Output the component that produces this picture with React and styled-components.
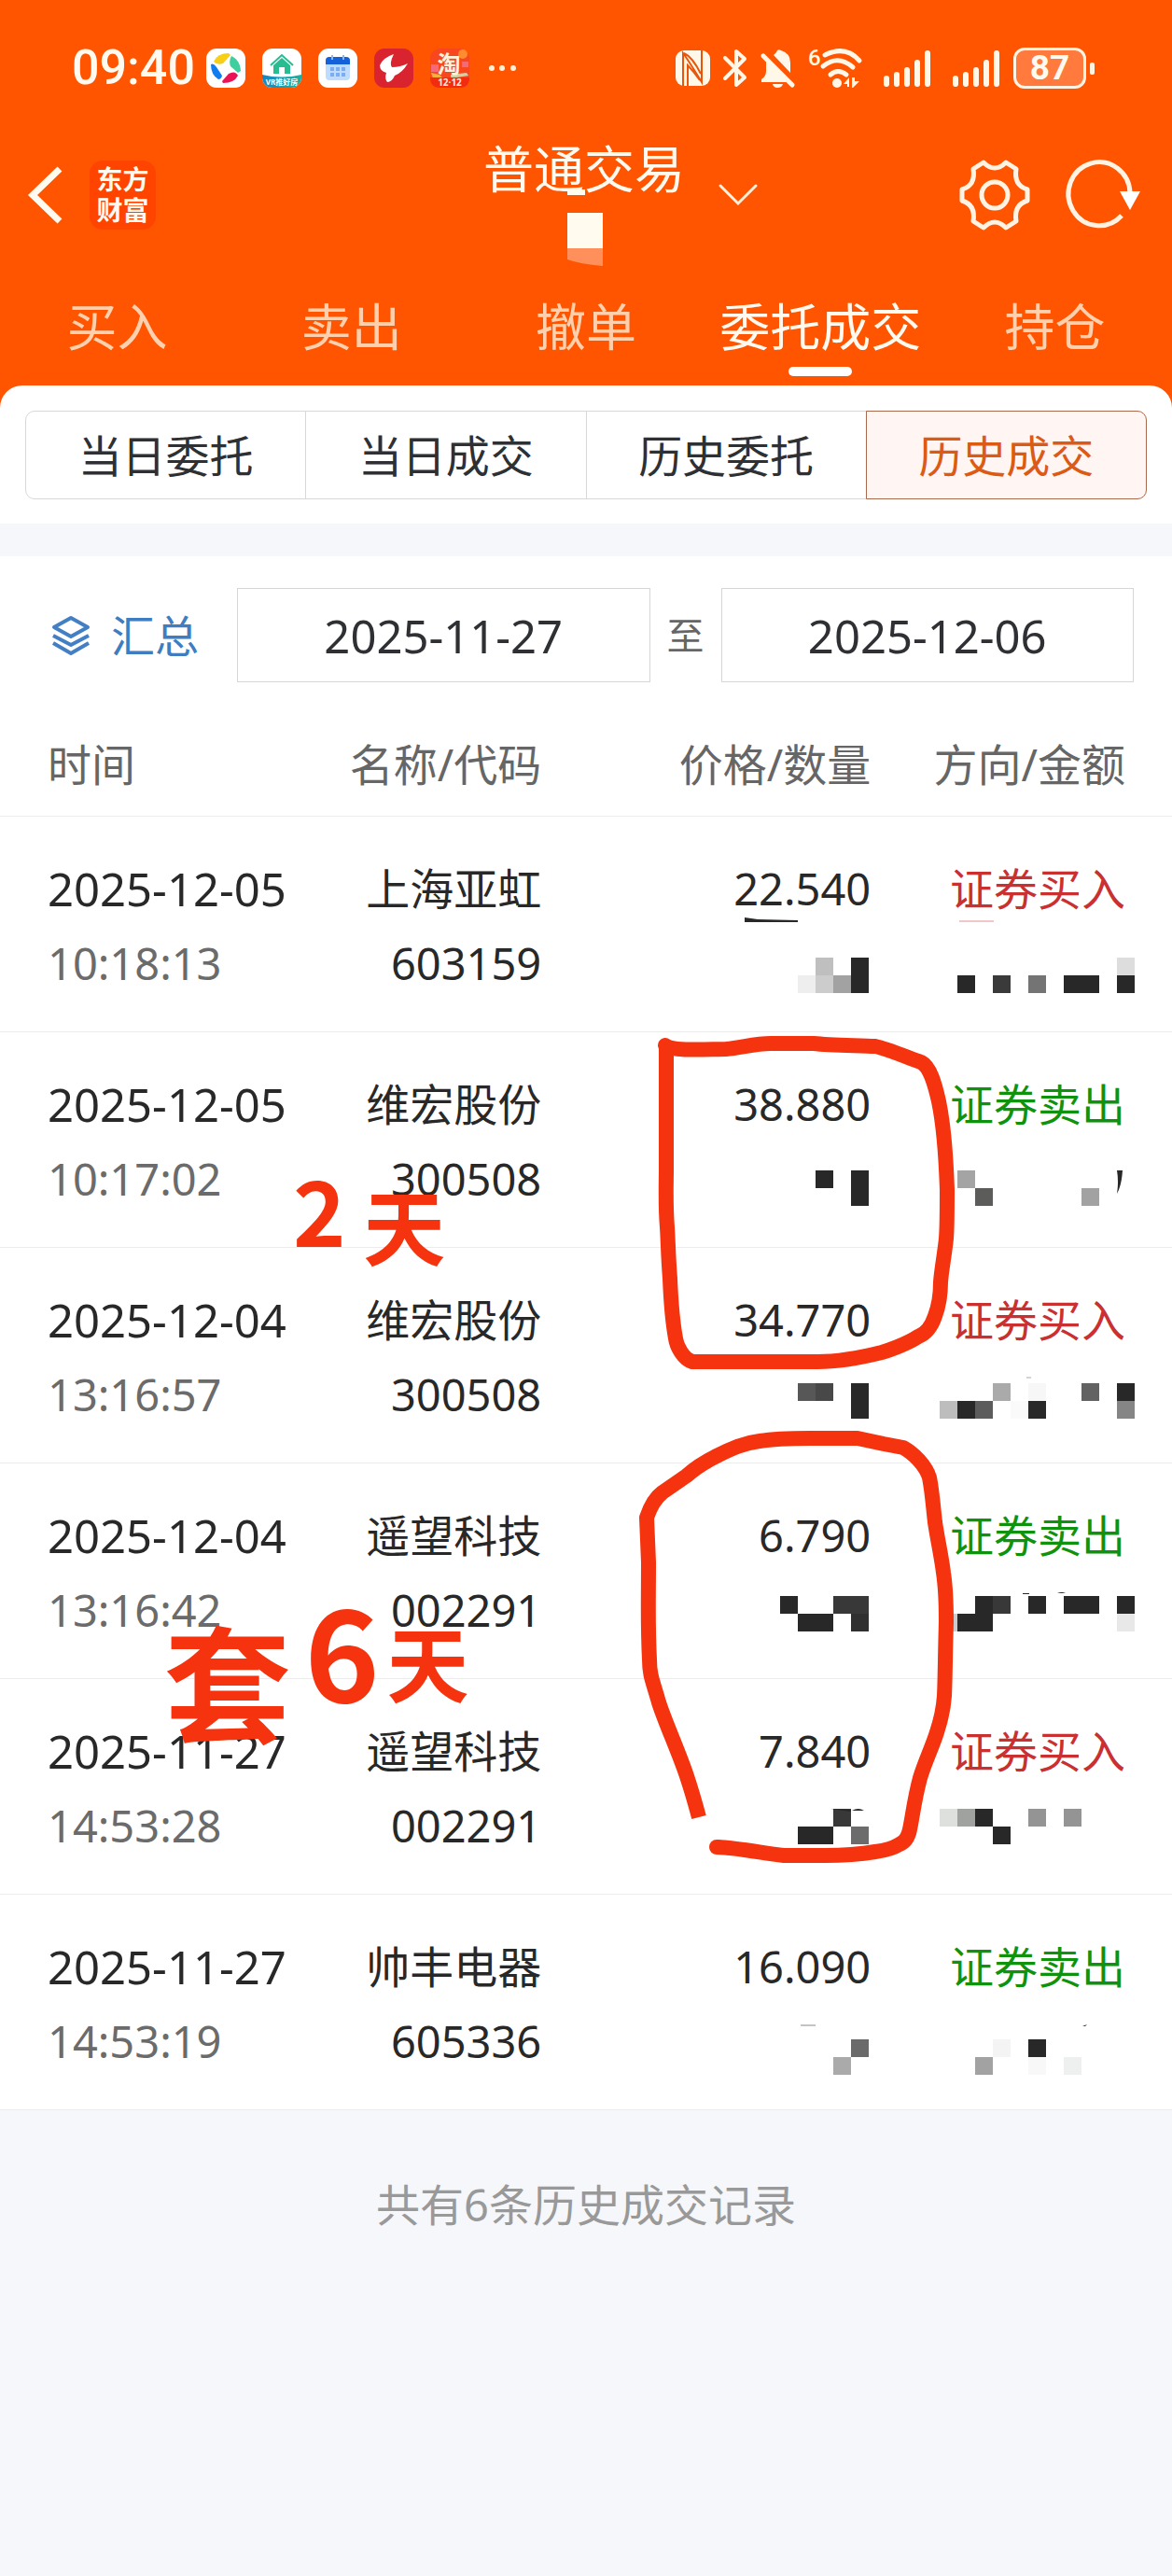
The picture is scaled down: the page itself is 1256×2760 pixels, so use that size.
import { useState } from "react";
import styled, { createGlobalStyle } from "styled-components";

const MAIN_TABS = ["买入", "卖出", "撤单", "委托成交", "持仓"];
const SUB_TABS = ["当日委托", "当日成交", "历史委托", "历史成交"];

const RECORDS = [
  { date: "2025-12-05", time: "10:18:13", name: "上海亚虹", code: "603159", price: "22.540", side: "buy" },
  { date: "2025-12-05", time: "10:17:02", name: "维宏股份", code: "300508", price: "38.880", side: "sell" },
  { date: "2025-12-04", time: "13:16:57", name: "维宏股份", code: "300508", price: "34.770", side: "buy" },
  { date: "2025-12-04", time: "13:16:42", name: "遥望科技", code: "002291", price: "6.790", side: "sell" },
  { date: "2025-11-27", time: "14:53:28", name: "遥望科技", code: "002291", price: "7.840", side: "buy" },
  { date: "2025-11-27", time: "14:53:19", name: "帅丰电器", code: "605336", price: "16.090", side: "sell" },
];

const SIDE_LABEL = { buy: "证券买入", sell: "证券卖出" };

const DARK = "#292828";
const BLOCK = 19;

// hidden quantities and amounts: one line of blocks per entry, [x, colour]
const MOSAIC = [
  { y: 1026, blocks: [[874, "#bfbfbf"], [912, DARK], [1197, "#dddddd"]] },
  {
    y: 1045,
    blocks: [
      [855, "#eeeeee"], [874, "#cccccc"], [893, "#a2a2a2"], [912, DARK],
      [1026, DARK], [1064, "#3a3a3a"], [1102, "#747474"], [1140, DARK], [1159, DARK], [1197, DARK],
    ],
  },
  { y: 1254, blocks: [[874, DARK], [912, DARK], [1026, "#a4a4a4"]] },
  { y: 1273, blocks: [[912, DARK], [1045, "#5c5c5a"], [1159, "#a2a2a2"]] },
  {
    y: 1482,
    blocks: [
      [855, "#575757"], [874, "#484848"], [912, DARK],
      [1064, "#aaaaaa"], [1102, "#f7f7f7"], [1159, "#626262"], [1197, DARK],
    ],
  },
  {
    y: 1501,
    blocks: [
      [912, DARK], [1007, "#bdbdbd"], [1026, DARK], [1045, "#5c5c5c"],
      [1083, "#fafafa"], [1102, DARK], [1197, "#858585"],
    ],
  },
  {
    y: 1710,
    blocks: [
      [836, DARK], [893, "#383838"], [912, "#383838"],
      [1045, DARK], [1064, "#383838"], [1102, DARK], [1140, DARK], [1159, DARK], [1197, DARK],
    ],
  },
  {
    y: 1729,
    blocks: [
      [855, DARK], [874, DARK], [912, "#303030"],
      [1007, "#cccccc"], [1026, DARK], [1045, DARK], [1197, "#e8e8e8"],
    ],
  },
  {
    y: 1938,
    blocks: [
      [893, "#383838"], [1007, "#dde0dd"], [1026, "#a0a2a0"],
      [1045, DARK], [1102, "#949494"], [1140, "#949494"],
    ],
  },
  { y: 1957, blocks: [[855, DARK], [874, DARK], [912, "#6c6c6c"], [1064, DARK]] },
  { y: 2185, blocks: [[912, "#6a6a6a"], [1064, "#f4f4f4"], [1102, DARK]] },
  { y: 2204, blocks: [[893, "#aaaaaa"], [1045, "#a2a2a2"], [1102, "#f8f8f8"], [1140, "#eef0ef"]] },
];

export default function App() {
  const [mainTab, setMainTab] = useState("委托成交");
  const [subTab, setSubTab] = useState("历史成交");
  const [from, setFrom] = useState("2025-11-27");
  const [to, setTo] = useState("2025-12-06");

  return (
    <>
      <GlobalStyle />
      <StyledHeader>
        <StatusBar />
        <TitleBar />
        <StyledMainTabs>
          {MAIN_TABS.map((tab) => (
            <StyledMainTab key={tab} $active={tab === mainTab} onClick={() => setMainTab(tab)}>
              {tab}
            </StyledMainTab>
          ))}
        </StyledMainTabs>
      </StyledHeader>
      <main>
        <StyledSubTabsWrapper>
          <StyledSubTabs>
            {SUB_TABS.map((tab) => (
              <StyledSubTab key={tab} $active={tab === subTab} onClick={() => setSubTab(tab)}>
                {tab}
              </StyledSubTab>
            ))}
          </StyledSubTabs>
        </StyledSubTabsWrapper>
        <StyledPanel>
          <StyledFilter>
            <StyledSummaryButton>
              <LayersIcon />
              汇总
            </StyledSummaryButton>
            <StyledDateInput aria-label='开始日期' value={from} onChange={(e) => setFrom(e.target.value)} />
            <StyledTo>至</StyledTo>
            <StyledDateInput aria-label='结束日期' value={to} onChange={(e) => setTo(e.target.value)} />
          </StyledFilter>
          <StyledTableWrapper>
            <RecordTable />
            <Markup />
          </StyledTableWrapper>
        </StyledPanel>
      </main>
      <StyledFooter>共有6条历史成交记录</StyledFooter>
    </>
  );
}

function RecordTable() {
  return (
    <StyledTable>
      <thead>
        <tr>
          <StyledTh $width='25%'>时间</StyledTh>
          <StyledTh $width='21.2%'>名称/代码</StyledTh>
          <StyledTh $width='28.1%'>价格/数量</StyledTh>
          <StyledTh>方向/金额</StyledTh>
        </tr>
      </thead>
      <tbody>
        {RECORDS.map((record) => (
          <tr key={record.date + record.time}>
            <StyledTd>
              <StyledDate>{record.date}</StyledDate>
              <StyledTime>{record.time}</StyledTime>
            </StyledTd>
            <StyledTd>
              <StyledName>{record.name}</StyledName>
              <div>{record.code}</div>
            </StyledTd>
            <StyledTd>
              <div>{record.price}</div>
            </StyledTd>
            <StyledTd>
              <StyledName $side={record.side}>{SIDE_LABEL[record.side]}</StyledName>
            </StyledTd>
          </tr>
        ))}
      </tbody>
    </StyledTable>
  );
}

// blocks and pen marks that lie over the table
function Markup() {
  return (
    <StyledMarkup>
      <svg viewBox='0 731 1256 1530' preserveAspectRatio='none' aria-hidden='true'>
        <g shapeRendering='crispEdges'>
          {MOSAIC.map(({ y, blocks }) =>
            blocks.map(([x, fill]) => (
              <rect key={`${x}-${y}`} x={x} y={y} width={BLOCK} height={BLOCK} fill={fill} />
            ))
          )}
        </g>
        <g fill={DARK}>
          <path d='M798 983 L812 985 L855 986 V988 H798Z' />
          <path d='M1197 1254 H1203 Q1202 1270 1197 1279 Q1199 1266 1197 1254Z' />
          <path d='M890 1938 L912 1939 V1941Z' />
          <path d='M913 1940 Q920 1936 926 1940Z' />
          <path d='M1096 1707 H1103 V1708 H1096Z M1133 1707 Q1138 1705 1142 1707Z' />
          <path d='M1160 2171 L1165 2169 L1163 2171Z' />
        </g>
        <path d='M858 2170 H874' stroke='#888' />
        <path d='M1100 1476 H1105' stroke='#aaa' />
        <path d='M1028 987 H1065' stroke='#e09090' />
        <g fill='none' stroke='#f5330f' strokeWidth='16' strokeLinejoin='round'>
          <path
            strokeLinecap='round'
            d='M713 1120 C722 1127 760 1124 778 1124 C794 1123 808 1118 826 1118 H872 C890 1120 920 1120 938 1121 C952 1124 975 1134 987 1138 C997 1143 1002 1162 1006 1180 C1011 1204 1014 1245 1015 1275 C1015 1295 1015 1315 1014 1327 C1012 1346 1009 1360 1008 1374 C1008 1390 1005 1402 1002 1410 C998 1422 992 1429 984 1432 C972 1440 952 1447 945 1449 C925 1454 896 1459 876 1459 H742 C732 1456 725 1442 724 1434 C720 1412 719 1395 718 1370 C716 1345 716 1330 715 1315 C713 1290 714 1265 714 1255 V1122'
          />
          <path d='M749 1947 C745 1932 741 1918 736 1903 C727 1876 713 1846 706 1824 C700 1802 696 1796 696 1778 C694 1740 695 1720 695 1674 L693 1626 C697 1614 702 1605 710 1599 L736 1581 C746 1572 758 1565 768 1560 C784 1552 797 1546 814 1544 C832 1541 850 1541 868 1541 H919 L947 1547 L968 1551 C979 1557 992 1570 996 1583 C999 1598 1000 1614 1002 1631 C1005 1651 1009 1668 1011 1685 C1014 1704 1014 1720 1014 1738 C1013 1768 1013 1796 1012 1817 C1011 1832 1008 1844 1004 1856 C999 1872 991 1888 986 1905 C980 1927 978 1946 975 1960 C973 1970 969 1974 964 1976 C956 1981 946 1983 938 1984 C920 1987 905 1988 884 1988 H840 C815 1985 792 1980 768 1979' />
          <path strokeLinecap='round' d='M768 1979 H769' />
        </g>
      </svg>
      <StyledPenNote $left='25%' $top={516} $size={96}>
        2
      </StyledPenNote>
      <StyledPenNote $left='31%' $top={536} $size={88}>
        天
      </StyledPenNote>
      <StyledPenNote $left='14%' $top={1000} $size={136}>
        套
      </StyledPenNote>
      <StyledPenNote $left='26%' $top={966} $size={136}>
        6
      </StyledPenNote>
      <StyledPenNote $left='33%' $top={1004} $size={88}>
        天
      </StyledPenNote>
    </StyledMarkup>
  );
}

function StatusBar() {
  return (
    <StyledStatusBar>
      <StyledClock>09:40</StyledClock>
      <StyledAppIcons>
        <svg width='42' height='42' viewBox='0 0 42 42'>
          <rect width='42' height='42' rx='11' fill='#fff' />
          <path d='M8 14 Q12 5 24 5 L26 7 L18 16 Q12 18 8 14Z' fill='#f7cf16' />
          <path d='M27 8 Q36 12 37 24 L34 26 L26 19 Q24 13 27 8Z' fill='#3fcf9f' />
          <path d='M34 29 Q30 37 18 37 L17 35 L24 27 Q31 23 34 29Z' fill='#ea1355' />
          <path d='M5 17 Q8 15 11 20 L17 29 Q16 33 13 33 Q5 28 5 17Z' fill='#0f7df0' />
        </svg>
        <svg width='42' height='42' viewBox='0 0 42 42'>
          <defs>
            <clipPath id='house-clip'>
              <rect width='42' height='42' rx='11' />
            </clipPath>
            <linearGradient id='house-band'>
              <stop offset='0' stopColor='#1686c4' />
              <stop offset='1' stopColor='#17b3a0' />
            </linearGradient>
          </defs>
          <g clipPath='url(#house-clip)'>
            <rect width='42' height='42' fill='#fff' />
            <path d='M0 28 Q21 33 42 28 V42 H0Z' fill='url(#house-band)' />
          </g>
          <path d='M9 18 L21 7 L33 18' fill='none' stroke='#27bd90' strokeWidth='2' />
          <path d='M12 18 L21 10 L30 18 V27 H24 V20 H18 V27 H12Z' fill='#27bd90' />
          <text x='21' y='39' fontSize='8' fontWeight='700' fill='#fff' textAnchor='middle'>
            VR推好房
          </text>
        </svg>
        <svg width='42' height='42' viewBox='0 0 42 42'>
          <rect width='42' height='42' rx='11' fill='#fff' />
          <rect x='8' y='9' width='26' height='25' rx='4' fill='#bfdcff' />
          <path d='M8 17 V13 Q8 9 12 9 H30 Q34 9 34 13 V17Z' fill='#1561da' />
          <path d='M15 7 V12 M27 7 V12' stroke='#8ab8f5' strokeWidth='2' />
          <path d='M13 20h4v4h-4z M19 20h4v4h-4z M25 20h4v4h-4z M13 26h4v4h-4z M19 26h4v4h-4z M25 26h4v4h-4z' fill='#7badf0' />
        </svg>
        <svg width='42' height='42' viewBox='0 0 42 42'>
          <rect width='42' height='42' rx='11' fill='#d9232f' />
          <path d='M21 6 Q9 10 6 18 Q6 24 13 26 Q11 32 14 36 Q19 36 22 29 Q30 26 36 16 Q28 20 19 20 Q16 16 21 6Z' fill='#fff' />
        </svg>
        <svg width='42' height='42' viewBox='0 0 42 42'>
          <rect width='42' height='42' rx='11' fill='#f8461f' />
          <circle cx='35' cy='6' r='5' fill='#ff8c2e' />
          <rect x='1' y='17' width='8' height='8' fill='#f56a78' />
          <rect x='34' y='14' width='7' height='6' fill='#f56a78' />
          <path d='M1 26 L10 28 L14 32 H3Z' fill='#f6b03c' />
          <path d='M22 28 L39 26 L41 29 L22 32Z' fill='#cfd3a4' />
          <path d='M0 31 H42 Q42 42 31 42 H11 Q0 42 0 31Z' fill='#f32b10' />
          <text x='20' y='26' fontSize='25' fontWeight='700' fill='#fff3da' textAnchor='middle'>
            淘
          </text>
          <text x='21' y='40' fontSize='10' fontWeight='700' fill='#ffe9d6' textAnchor='middle'>
            12·12
          </text>
        </svg>
      </StyledAppIcons>
      <svg width='30' height='8' viewBox='0 0 30 8' fill='#fff0d8'>
        <circle cx='4' cy='4' r='3' />
        <circle cx='15' cy='4' r='3' />
        <circle cx='27' cy='4' r='3' />
      </svg>
      <StyledSystemIcons>
        <svg width='37' height='40' viewBox='0 0 37 40'>
          <rect y='1' width='37' height='38' rx='9' fill='#fff8e8' />
          <path d='M8 39 V4 Q14 12 28 35 V1 M13 39 V17 Q20 24 26 33 M9 4 Q18 8 27 26' fill='none' stroke='#e8560c' strokeWidth='2' />
        </svg>
        <svg width='26' height='42' viewBox='0 0 26 42' fill='none' stroke='#fff8e8' strokeWidth='4' strokeLinejoin='round' strokeLinecap='round'>
          <path d='M2 10 L23 31 L14 39 V3 L23 11 L2 32' />
        </svg>
        <svg width='37' height='42' viewBox='0 0 37 42'>
          <path d='M6 11 L31 36 H1 V33 Q6 30 6 24Z' fill='#fff8e8' />
          <path d='M14 7 L17 4 Q18 0 22 2 Q32 5 32 15 V26Z' fill='#fff8e8' />
          <path d='M3 8 L34 39' stroke='#fff8e8' strokeWidth='5' strokeLinecap='round' />
          <path d='M13 38 H24 Q23 42 18 42 Q14 42 13 38Z' fill='#fff8e8' />
        </svg>
        <svg width='58' height='44' viewBox='0 0 58 44'>
          <text x='0' y='19' fontFamily='Roboto, sans-serif' fontSize='24' fontWeight='500' fill='#fff8e8'>
            6
          </text>
          <g fill='none' stroke='#fff8e8' strokeWidth='5' strokeLinecap='round'>
            <path d='M18 8 Q40 -3 55 14' />
            <path d='M16 20 Q32 7 48 21' />
            <path d='M24 29 Q32 22 41 29' />
          </g>
          <circle cx='31' cy='38' r='5' fill='#fff8e8' />
          <path d='M44 32 V42 H42 V39 H38Z M47 32 H50 V36 H55 L48 43 H47Z' fill='#fff8e8' />
        </svg>
        <SignalIcon />
        <SignalIcon />
        <StyledBattery>87</StyledBattery>
      </StyledSystemIcons>
    </StyledStatusBar>
  );
}

function SignalIcon() {
  return (
    <StyledSignal width='52' height='42' viewBox='0 0 52 42' stroke='#fff8e8' strokeWidth='6' strokeLinecap='round'>
      <path d='M4 32 V38 M15 28 V38 M26 23 V38 M37 15 V38 M48 5 V38' />
    </StyledSignal>
  );
}

function TitleBar() {
  return (
    <StyledTitleBar>
      <StyledTitleLeft>
        <StyledIconButton aria-label='返回'>
          <svg width='38' height='62' viewBox='0 0 38 62' fill='none' stroke='#fffaf0' strokeWidth='7'>
            <path d='M34 3 L5 31 L34 59' />
          </svg>
        </StyledIconButton>
        <StyledLogo>
          东方
          <br />
          财富
        </StyledLogo>
      </StyledTitleLeft>
      <StyledTitle>
        普通交易
        <svg width='38' height='82' viewBox='0 0 38 82' aria-hidden='true'>
          <path d='M0 0 H19 V6 H0Z M0 25 H38 V63 H0Z' fill='#fffbee' />
          <path d='M0 63 H38 V82 Q14 80 0 75Z' fill='#ff905c' />
        </svg>
      </StyledTitle>
      <StyledTitleRight>
        <StyledIconButton aria-label='切换账户'>
          <svg width='42' height='24' viewBox='0 0 42 24' fill='none' stroke='#fff0dc' strokeWidth='3' strokeLinecap='round'>
            <path d='M2 2 L21 21 L40 2' />
          </svg>
        </StyledIconButton>
        <StyledTools>
          <StyledIconButton aria-label='设置'>
            <svg width='76' height='76' viewBox='-38 -38 76 76' fill='none' stroke='#fff4e4' strokeWidth='5' strokeLinejoin='round'>
              <path d='M-12 -35 Q-6 -29 0 -29 Q6 -29 12 -35 L23 -28 C21 -16 25 -9 35 -6 V6 C25 9 21 16 23 28 L12 35 Q6 29 0 29 Q-6 29 -12 35 L-23 28 C-21 16 -25 9 -35 6 V-6 C-25 -9 -21 -16 -23 -28Z' />
              <circle r='14' />
            </svg>
          </StyledIconButton>
          <StyledIconButton aria-label='刷新'>
            <svg width='80' height='76' viewBox='0 0 80 76'>
              <path d='M60 60 A33 34 0 1 1 69 36' fill='none' stroke='#fff4e4' strokeWidth='5' />
              <path d='M58 34 H80 L69 54Z' fill='#fff' />
            </svg>
          </StyledIconButton>
        </StyledTools>
      </StyledTitleRight>
    </StyledTitleBar>
  );
}

function LayersIcon() {
  return (
    <svg width='42' height='42' viewBox='0 0 42 42' fill='none' stroke='#437fc4' strokeWidth='4' strokeLinejoin='round'>
      <path d='M21 2 L39 12 L21 22 L3 12Z' />
      <path d='M2 21 L21 31 L40 21 M2 29 L21 40 L40 29' />
    </svg>
  );
}

const GlobalStyle = createGlobalStyle`
  body {
    margin: 0;
    background-color: #f6f7fa;
    color: #282828;
    font-family: "Noto Sans", "Noto Sans CJK SC", sans-serif;
    font-size: 47px;
    line-height: 80px;
  }
  button, input {
    font: inherit;
    color: inherit;
    margin: 0;
    padding: 0;
    border: 0;
    background: none;
    box-sizing: border-box;
  }
  svg {
    display: block;
    flex-shrink: 0;
    overflow: visible;
  }
`;

const StyledHeader = styled.header`
  background-color: #ff5500;
  color: #fffaf0;
`;

const StyledStatusBar = styled.div`
  display: flex;
  align-items: center;
  height: 146px;
  box-sizing: border-box;
  padding: 0 92px 0 77px;
`;

const StyledClock = styled.span`
  width: 144px;
  font-family: Roboto, sans-serif;
  font-size: 52px;
  font-weight: 500;
`;

const StyledAppIcons = styled.div`
  display: flex;
  gap: 18px;
  margin-right: 20px;
`;

const StyledSystemIcons = styled.div`
  display: flex;
  align-items: center;
  gap: 14px;
  margin-left: auto;
`;

const StyledSignal = styled.svg`
  margin-left: 8px;
`;

const StyledBattery = styled.span`
  position: relative;
  width: 78px;
  height: 44px;
  box-sizing: border-box;
  border: 3px solid #fff4e4;
  border-radius: 12px;
  background-color: #ff7a3c;
  font-family: Roboto, sans-serif;
  font-size: 37px;
  font-weight: 700;
  line-height: 38px;
  text-align: center;
  &::after {
    content: "";
    position: absolute;
    top: 13px;
    right: -12px;
    width: 5px;
    height: 13px;
    border-radius: 2px;
    background-color: #fff4e4;
  }
`;

const StyledTitleBar = styled.div`
  display: grid;
  grid-template-columns: 1fr auto 1fr;
  align-items: center;
  height: 126px;
  padding: 0 34px 0 30px;
`;

const StyledTitleLeft = styled.div`
  display: flex;
  align-items: center;
  gap: 28px;
`;

const StyledLogo = styled.span`
  width: 71px;
  padding: 4px 0;
  border-radius: 14px;
  background-color: #ff4400;
  font-size: 28px;
  font-weight: 700;
  line-height: 33px;
  text-align: center;
`;

const StyledTitle = styled.h1`
  position: relative;
  align-self: start;
  margin: 0;
  font-size: 54px;
  font-weight: 400;
  line-height: 70px;
  svg {
    position: absolute;
    top: 57px;
    left: 90px;
  }
`;

const StyledTitleRight = styled.div`
  display: flex;
  align-items: center;
  justify-content: space-between;
  padding-left: 36px;
`;

const StyledTools = styled.div`
  display: flex;
  gap: 38px;
`;

const StyledIconButton = styled.button`
  cursor: pointer;
`;

const StyledMainTabs = styled.nav`
  display: grid;
  grid-template-columns: repeat(5, 1fr);
  padding: 38px 0 34px;
  margin-bottom: -24px;
`;

const StyledMainTab = styled.button`
  display: flex;
  flex-direction: column;
  align-items: center;
  gap: 3px;
  font-size: 54px;
  line-height: 80px;
  color: ${({ $active }) => ($active ? "#fffaf0" : "#ffd0ad")};
  cursor: pointer;
  &::after {
    content: "";
    width: 68px;
    height: 10px;
    border-radius: 5px;
    background-color: ${({ $active }) => ($active ? "#fff" : "transparent")};
  }
`;

const StyledSubTabsWrapper = styled.div`
  position: relative;
  padding: 27px 27px 26px;
  border-radius: 24px 24px 0 0;
  background-color: #fff;
`;

const StyledSubTabs = styled.div`
  display: flex;
`;

const StyledSubTab = styled.button`
  flex: 1;
  height: 95px;
  border: 1px solid ${({ $active }) => ($active ? "#a8694c" : "#d6d8da")};
  background-color: ${({ $active }) => ($active ? "#fff5f2" : "#fff")};
  color: ${({ $active }) => ($active ? "#db5a14" : "#2e3033")};
  cursor: pointer;
  & + & {
    margin-left: -1px;
  }
  &:first-child {
    border-radius: 10px 0 0 10px;
  }
  &:last-child {
    border-radius: 0 10px 10px 0;
  }
`;

const StyledPanel = styled.section`
  margin-top: 35px;
  padding-top: 34px;
  background-color: #fff;
`;

const StyledFilter = styled.div`
  display: flex;
  align-items: center;
  padding: 0 41px 0 55px;
`;

const StyledSummaryButton = styled.button`
  display: flex;
  align-items: center;
  gap: 22px;
  width: 199px;
  flex-shrink: 0;
  color: #3f7cc0;
  cursor: pointer;
`;

const StyledDateInput = styled.input`
  flex: 1;
  min-width: 0;
  height: 101px;
  border: 1px solid #d6d6d6;
  color: #2e3033;
  font-size: 49px;
  text-align: center;
`;

const StyledTo = styled.span`
  width: 76px;
  color: #666;
  font-size: 40px;
  text-align: center;
`;

const StyledTableWrapper = styled.div`
  position: relative;
`;

const StyledTable = styled.table`
  width: 100%;
  table-layout: fixed;
  border-collapse: separate;
  border-spacing: 0;
  th,
  td {
    border-bottom: 1px solid #ececec;
    text-align: right;
    vertical-align: top;
    white-space: nowrap;
  }
  th:first-child,
  td:first-child {
    padding-left: 51px;
    text-align: left;
  }
  th:last-child,
  td:last-child {
    padding-right: 50px;
  }
`;

const StyledTh = styled.th`
  width: ${({ $width }) => $width || "auto"};
  box-sizing: border-box;
  padding: 48px 0 15px;
  color: #666;
  font-weight: 400;
`;

const StyledTd = styled.td`
  padding: 37px 0 33px;
`;

const StyledDate = styled.div`
  font-size: 49px;
`;

const StyledTime = styled.div`
  color: #6b6b6b;
`;

const SIDE_COLOR = { buy: "#c9302f", sell: "#0f930f" };

const StyledName = styled.div`
  color: ${({ $side }) => SIDE_COLOR[$side] || "#282828"};
`;

const StyledMarkup = styled.div`
  position: absolute;
  inset: 0;
  pointer-events: none;
  svg {
    width: 100%;
    height: 100%;
  }
`;

const StyledPenNote = styled.span`
  position: absolute;
  left: ${({ $left }) => $left};
  top: ${({ $top }) => $top}px;
  color: #f5330f;
  font-family: "Noto Sans CJK SC", sans-serif;
  font-size: ${({ $size }) => $size}px;
  font-weight: 700;
  line-height: 1;
`;

const StyledFooter = styled.footer`
  padding: 61px 0;
  color: #999;
  text-align: center;
`;
